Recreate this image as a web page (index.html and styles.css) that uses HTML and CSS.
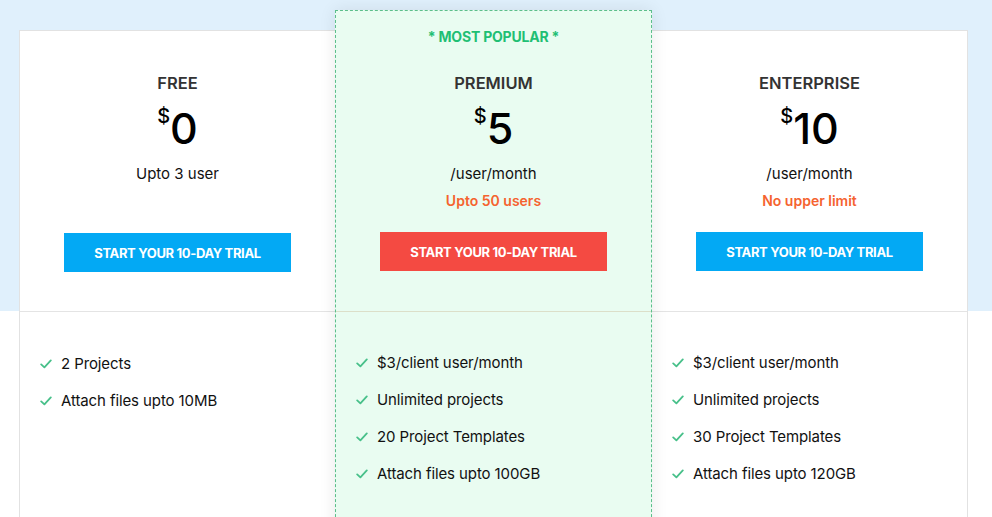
FILE: index.html
```html
<!DOCTYPE html>
<html lang="en">
<head>
<meta charset="utf-8">
<title>Pricing</title>
<link rel="stylesheet" href="styles.css">
</head>
<body>
<main class="page">
  <section class="pricing">
    <div class="plan plan-free">
      <div class="plan-head">
        <h2 class="plan-name">FREE</h2>
        <div class="price"><span class="cur">$</span>0</div>
        <p class="per">Upto 3 user</p>
        <p class="limit"></p>
        <a class="btn btn-blue" href="#">START YOUR 10-DAY TRIAL</a>
      </div>
      <ul class="features">
        <li><svg class="tick" viewBox="0 0 12 10"><path d="M1.2 5.4 L4.4 8.4 L10.8 1.4"/></svg>2 Projects</li>
        <li><svg class="tick" viewBox="0 0 12 10"><path d="M1.2 5.4 L4.4 8.4 L10.8 1.4"/></svg>Attach files upto 10MB</li>
      </ul>
    </div>
    <div class="plan plan-popular">
      <div class="plan-head">
        <p class="badge">* MOST POPULAR *</p>
        <h2 class="plan-name">PREMIUM</h2>
        <div class="price"><span class="cur">$</span>5</div>
        <p class="per">/user/month</p>
        <p class="limit">Upto 50 users</p>
        <a class="btn btn-red" href="#">START YOUR 10-DAY TRIAL</a>
      </div>
      <ul class="features">
        <li><svg class="tick" viewBox="0 0 12 10"><path d="M1.2 5.4 L4.4 8.4 L10.8 1.4"/></svg>$3/client user/month</li>
        <li><svg class="tick" viewBox="0 0 12 10"><path d="M1.2 5.4 L4.4 8.4 L10.8 1.4"/></svg>Unlimited projects</li>
        <li><svg class="tick" viewBox="0 0 12 10"><path d="M1.2 5.4 L4.4 8.4 L10.8 1.4"/></svg>20 Project Templates</li>
        <li><svg class="tick" viewBox="0 0 12 10"><path d="M1.2 5.4 L4.4 8.4 L10.8 1.4"/></svg>Attach files upto 100GB</li>
      </ul>
    </div>
    <div class="plan">
      <div class="plan-head">
        <h2 class="plan-name">ENTERPRISE</h2>
        <div class="price"><span class="cur">$</span>10</div>
        <p class="per">/user/month</p>
        <p class="limit">No upper limit</p>
        <a class="btn btn-blue" href="#">START YOUR 10-DAY TRIAL</a>
      </div>
      <ul class="features">
        <li><svg class="tick" viewBox="0 0 12 10"><path d="M1.2 5.4 L4.4 8.4 L10.8 1.4"/></svg>$3/client user/month</li>
        <li><svg class="tick" viewBox="0 0 12 10"><path d="M1.2 5.4 L4.4 8.4 L10.8 1.4"/></svg>Unlimited projects</li>
        <li><svg class="tick" viewBox="0 0 12 10"><path d="M1.2 5.4 L4.4 8.4 L10.8 1.4"/></svg>30 Project Templates</li>
        <li><svg class="tick" viewBox="0 0 12 10"><path d="M1.2 5.4 L4.4 8.4 L10.8 1.4"/></svg>Attach files upto 120GB</li>
      </ul>
    </div>
  </section>
</main>
</body>
</html>
```

FILE: styles.css
```css
* { box-sizing: border-box; }

html, body {
  margin: 0;
  padding: 0;
  height: 100%;
  overflow: hidden;
}

body {
  font-family: Inter, "Liberation Sans", sans-serif;
  color: #111;
  background: linear-gradient(#e0f0fc 0, #e0f0fc 311px, #ffffff 311px);
}

.page {
  padding: 30px 24px 0 19px;
}

.pricing {
  display: grid;
  grid-template-columns: 315px 317px 315px;
  background: #fff;
  border: 1px solid #e2e2e2;
  border-bottom: none;
}

.plan {
  display: flex;
  flex-direction: column;
  text-align: center;
}

.plan-head {
  height: 281px;
  padding-top: 42px;
  border-bottom: 1px solid #e4e4e4;
  display: flex;
  flex-direction: column;
  align-items: center;
}

.plan-popular {
  position: relative;
  z-index: 1;
  margin-top: -21px;
  background: #e9fcf1;
  border: 1px dashed #5cbf8b;
  border-bottom: none;
  box-shadow: 0 0 16px rgba(0, 0, 0, 0.09);
}

.plan-popular .plan-head {
  height: 301px;
  padding-top: 17px;
  border-bottom-color: #dcdfc9;
}

.badge {
  margin: 0 0 27px;
  font-size: 14px;
  line-height: 18px;
  font-weight: 700;
  color: #1fbf74;
  letter-spacing: -0.2px;
}

.plan-name {
  margin: 0;
  font-size: 16.5px;
  line-height: 20px;
  font-weight: 600;
  color: #333;
}

.price {
  margin-top: 14px;
  font-size: 43px;
  line-height: 43px;
  font-weight: 500;
  color: #000;
  display: flex;
  align-items: flex-start;
}

.cur {
  font-size: 20px;
  line-height: 20px;
  margin-top: -1px;
  margin-right: 0;
}

.per {
  margin: 14px 0 0;
  font-size: 15px;
  line-height: 20px;
  color: #111;
}

.limit {
  margin: 8px 0 0;
  height: 18px;
  font-size: 14px;
  line-height: 18px;
  font-weight: 600;
  color: #f5632f;
}

.btn {
  margin-top: 22px;
  width: 227px;
  height: 39px;
  display: flex;
  align-items: center;
  justify-content: center;
  color: #fff;
  text-decoration: none;
  font-size: 13px;
  font-weight: 700;
  letter-spacing: -0.35px;
}

.plan-free .btn { margin-top: 23px; }

.btn-blue { background: #03a9f4; }
.btn-red { background: #f44a42; }

.features {
  list-style: none;
  margin: 0;
  padding: 32px 0 0 20px;
  height: 240px;
  text-align: left;
}

.plan-free .features { padding-top: 33px; }

.features li {
  display: flex;
  align-items: center;
  height: 37px;
  font-size: 15px;
  color: #111;
  letter-spacing: -0.1px;
}

.tick {
  width: 12px;
  height: 10px;
  margin-right: 9px;
  fill: none;
  stroke: #48c08a;
  stroke-width: 1.8;
  stroke-linecap: round;
  stroke-linejoin: round;
}
```
